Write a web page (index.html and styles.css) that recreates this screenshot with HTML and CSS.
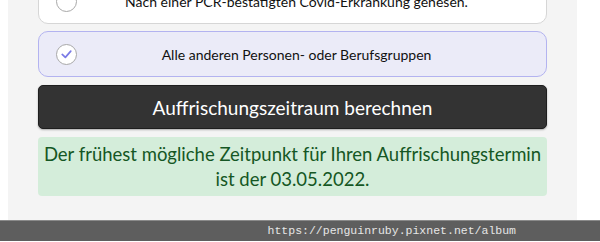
FILE: index.html
```html
<!DOCTYPE html>
<html lang="de">
<head>
  <meta charset="UTF-8" />
  <title>Auffrischungsrechner</title>
  <link rel="stylesheet" href="styles.css">
</head>
<body>

<main class="panel">
  <div class="options">
    <label class="option">
      <span class="radio"></span>
      <span class="option-text">Nach einer PCR-bestätigten Covid-Erkrankung genesen.</span>
    </label>
    <label class="option selected">
      <span class="radio">
        <svg viewBox="0 0 20 20" width="20" height="20">
          <path d="M5.5 10.5 L8.8 13.6 L14.5 7" fill="none" stroke="#7b7be6" stroke-width="1.8" stroke-linecap="round" stroke-linejoin="round"/>
        </svg>
      </span>
      <span class="option-text">Alle anderen Personen- oder Berufsgruppen</span>
    </label>
  </div>

  <button class="calc">Auffrischungszeitraum berechnen</button>

  <div class="result">
    Der frühest mögliche Zeitpunkt für Ihren Auffrischungstermin<br>
    ist der 03.05.2022.
  </div>
</main>

<footer class="watermark">https://penguinruby.pixnet.net/album</footer>

</body>
</html>
```

FILE: styles.css
```css
* {
  box-sizing: border-box;
}

body {
  margin: 0;
  font-family: Lato, 'Noto Sans', sans-serif;
  background: #ffffff;
  color: #222;
  overflow: hidden;
}

.panel {
  width: 569px;
  margin: -22px 0 0 8px;
  padding: 0 30px 24px;
  background: #f4f4f4;
  display: flex;
  flex-direction: column;
  gap: 8px;
}

.options {
  display: flex;
  flex-direction: column;
  gap: 7px;
}

.option {
  display: flex;
  align-items: center;
  height: 46px;
  padding: 0 0 0 17px;
  background: #ffffff;
  border: 1px solid #d6d6d6;
  border-radius: 10px;
}

.option.selected {
  background: #ebebf8;
  border-color: #b3b3f0;
}

.radio {
  flex: none;
  width: 21px;
  height: 21px;
  border: 1px solid #a8a8a8;
  border-radius: 50%;
  background: #ffffff;
  display: flex;
  align-items: center;
  justify-content: center;
}

.option-text {
  flex: 1;
  text-align: center;
  font-size: 14px;
  color: #111;
  padding-right: 30px;
}

.calc {
  height: 44px;
  border: 1px solid #1e1e1e;
  border-radius: 5px;
  background: #333333;
  color: #ffffff;
  font-family: inherit;
  font-size: 19px;
  box-shadow: 0 1px 2px rgba(0, 0, 0, 0.3);
}

.result {
  height: 59px;
  padding: 5px 0;
  background: #d4edda;
  border-radius: 4px;
  color: #155724;
  font-size: 18.5px;
  line-height: 25px;
  text-align: center;
  white-space: nowrap;
}

.watermark {
  height: 21px;
  background: #5e5e5e;
  border-top: 1px solid #8a8a8a;
  color: #e6e6e6;
  font-family: 'Liberation Mono', monospace;
  font-size: 11.5px;
  line-height: 20px;
  text-align: right;
  padding-right: 84px;
}
```
